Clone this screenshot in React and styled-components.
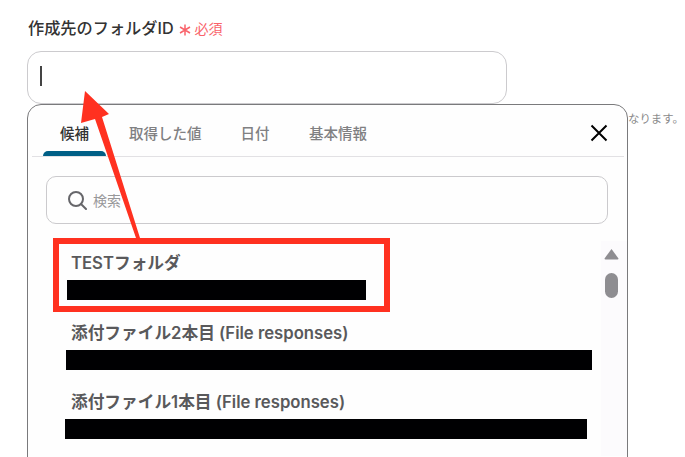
import React from 'react';
import styled, {createGlobalStyle} from 'styled-components';

const FONT = `Inter, "Noto Sans CJK JP", sans-serif`;

const GlobalStyle = createGlobalStyle`
  html, body {
    margin: 0;
    padding: 0;
    background: #ffffff;
    overflow: hidden;
  }
`;

const Page = styled.div`
  position: relative;
  width: 685px;
  height: 457px;
  overflow: hidden;
  padding: 16px 0 0 27px;
  box-sizing: border-box;
  font-family: ${FONT};
`;

const LabelRow = styled.div`
  display: flex;
  align-items: center;
  height: 23px;
  padding-left: 1px;
`;

const FieldLabel = styled.span`
  font-size: 16.2px;
  font-weight: 500;
  color: #333333;
  line-height: 22px;
`;

const RequiredStar = styled.span`
  width: 12px;
  height: 12px;
  margin-left: 5px;
  margin-top: 4px;
  display: flex;
`;

const RequiredText = styled.span`
  font-size: 14px;
  color: #f9636b;
  margin-left: 4px;
`;

const TextInput = styled.div`
  width: 480px;
  height: 53px;
  margin-top: 12px;
  box-sizing: border-box;
  border: 1px solid #cccbce;
  border-radius: 14px;
  display: flex;
  align-items: center;
  padding: 0 0 4px 12px;
`;

const Caret = styled.div`
  width: 2px;
  height: 20px;
  background: #444444;
`;

const PanelRow = styled.div`
  display: flex;
  align-items: flex-start;
`;

const Panel = styled.div`
  width: 601px;
  height: 400px;
  flex: none;
  box-sizing: border-box;
  border: 1px solid #7a7a7c;
  border-radius: 14px;
  background: #fefefe;
`;

const Note = styled.span`
  font-size: 11.4px;
  color: #8a8a8a;
  line-height: 18px;
  margin-top: 6px;
  white-space: nowrap;
`;

const TabBar = styled.div`
  display: flex;
  align-items: stretch;
  height: 52px;
  margin: 0 3px 0 4px;
  border-bottom: 1px solid #e2e1e4;
  padding-left: 11px;
  box-sizing: border-box;
`;

const Tab = styled.div`
  position: relative;
  width: ${(props) => props.$width}px;
  margin-right: ${(props) => props.$gap}px;
  padding-top: 19px;
  box-sizing: border-box;
  text-align: center;
  font-size: 14.5px;
  line-height: 20px;
  font-weight: 500;
  white-space: nowrap;
  color: ${(props) => (props.$active ? '#333333' : '#808082')};
  &::after {
    content: '';
    display: ${(props) => (props.$active ? 'block' : 'none')};
    position: absolute;
    left: 0;
    right: 0;
    bottom: 0;
    height: 5px;
    background: #005f86;
    border-radius: 5px 5px 0 0;
  }
`;

const CloseButton = styled.div`
  margin-left: auto;
  margin-right: 15px;
  margin-top: 18px;
  width: 20px;
  height: 20px;
`;

const SearchWrap = styled.div`
  padding: 19px 19px 0 18px;
`;

const SearchBox = styled.div`
  height: 48px;
  box-sizing: border-box;
  border: 1px solid #cbcacd;
  border-radius: 10px;
  display: flex;
  align-items: center;
  padding-left: 20px;
  gap: 6px;
`;

const SearchText = styled.span`
  font-size: 14px;
  color: #98989a;
`;

const ListArea = styled.div`
  display: flex;
  margin-top: 17px;
  height: 215px;
`;

const List = styled.div`
  flex: 1;
  padding-top: 11px;
`;

const Item = styled.div`
  height: 69.5px;
`;

const ItemName = styled.div`
  font-size: 16.7px;
  line-height: 22px;
  font-weight: 600;
  color: #59595b;
  padding-left: 43px;
  white-space: nowrap;
`;

const ItemMask = styled.div`
  margin-top: 6px;
  margin-left: ${(props) => props.$left}px;
  width: ${(props) => props.$width}px;
  height: 20px;
  background: #000002;
`;

const ScrollBar = styled.div`
  width: 26px;
  flex: none;
  box-sizing: border-box;
  background: #fcfbfd;
  display: flex;
  flex-direction: column;
  align-items: center;
  padding: 7px 6px 0 0;
  gap: 13px;
`;

const ScrollThumb = styled.div`
  width: 13px;
  height: 25px;
  border-radius: 7px;
  background: #8e8d91;
`;

const Annotation = styled.svg`
  position: absolute;
  left: 0;
  top: 0;
  pointer-events: none;
`;

const HighlightBox = styled.div`
  position: absolute;
  left: 53px;
  top: 238px;
  width: 337px;
  height: 74px;
  box-sizing: border-box;
  border: 6px solid #ff3120;
`;

const items = [
  {name: 'TESTフォルダ', left: 39, width: 299},
  {name: '添付ファイル2本目 (File responses)', left: 38, width: 526},
  {name: '添付ファイル1本目 (File responses)', left: 37, width: 522},
];

export default function App() {
  return (
    <Page>
      <GlobalStyle />
      <LabelRow>
        <FieldLabel>作成先のフォルダID</FieldLabel>
        <RequiredStar>
          <svg width="12" height="12" viewBox="0 0 12 12">
            <path d="M6 0.5 V11.5 M1 3 L11 9 M11 3 L1 9" stroke="#f9636b" strokeWidth="1.5" fill="none" />
          </svg>
        </RequiredStar>
        <RequiredText>必須</RequiredText>
      </LabelRow>
      <TextInput>
        <Caret />
      </TextInput>
      <PanelRow>
        <Panel>
          <TabBar>
            <Tab $active $width={63} $gap={23}>候補</Tab>
            <Tab $width={72} $gap={39}>取得した値</Tab>
            <Tab $width={30} $gap={38}>日付</Tab>
            <Tab $width={60} $gap={0}>基本情報</Tab>
            <CloseButton>
              <svg width="20" height="20" viewBox="0 0 20 20">
                <path d="M2.5 2.5 L17.5 17.5 M17.5 2.5 L2.5 17.5" stroke="#000" strokeWidth="2" fill="none" />
              </svg>
            </CloseButton>
          </TabBar>
          <SearchWrap>
            <SearchBox>
              <svg width="20" height="20" viewBox="0 0 20 20">
                <circle cx="9" cy="9" r="7" stroke="#66666a" strokeWidth="2" fill="none" />
                <path d="M14 14 L19 19" stroke="#66666a" strokeWidth="2" strokeLinecap="round" />
              </svg>
              <SearchText>検索</SearchText>
            </SearchBox>
          </SearchWrap>
          <ListArea>
            <List>
              {items.map((item) => (
                <Item key={item.name}>
                  <ItemName>{item.name}</ItemName>
                  <ItemMask $left={item.left} $width={item.width} />
                </Item>
              ))}
            </List>
            <ScrollBar>
              <svg width="15" height="12" viewBox="0 0 15 12">
                <path d="M7.5 1 L14.5 10.5 Q14.5 11.5 13.5 11.5 L1.5 11.5 Q0.5 11.5 0.5 10.5 Z" fill="#8e8d91" />
              </svg>
              <ScrollThumb />
            </ScrollBar>
          </ListArea>
        </Panel>
        <Note>なります。</Note>
      </PanelRow>
      <HighlightBox />
      <Annotation width="685" height="457" viewBox="0 0 685 457">
        <polygon points="85,91 109,114 102,117 140,238 136,238 95,119 81,123" fill="#ff3120" />
      </Annotation>
    </Page>
  );
}
